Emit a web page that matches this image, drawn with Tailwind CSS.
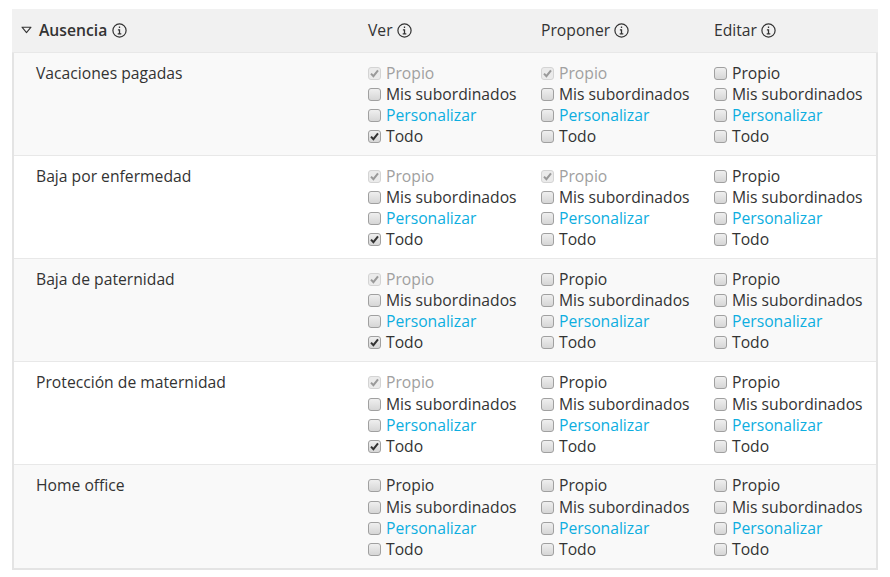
<!DOCTYPE html>
<html lang="es">
<head>
  <meta charset="UTF-8">
  <title>Ausencia</title>
  <script src="https://cdn.jsdelivr.net/npm/@tailwindcss/browser@4"></script>
</head>
<body class="bg-white font-['Open_Sans',sans-serif] text-[15.7px] leading-[21px] text-[#333]">
  <div class="pt-[9px] pl-[12px] w-[878px]">
    <!-- Cabecera -->
    <div class="flex items-center h-[44px] pb-[1px] bg-[#f1f1f1] border-b border-[#e8e8e8]">
      <div class="flex items-center w-[356px] shrink-0 pl-[9px] gap-[7px]">
        <svg width="11" height="8" viewBox="0 0 11 8" fill="none" stroke="#333" stroke-width="1.1"><path d="M1 1.2h9L5.5 6.6z" stroke-linejoin="round"/></svg>
        <span class="font-semibold">Ausencia</span>
        <svg width="15" height="15" viewBox="0 0 15 15" fill="none" stroke="#333" class="-ml-[2px]"><circle cx="7.5" cy="7.5" r="6.6" stroke-width="1.2"/><path d="M7.5 3.5v1.6M5.9 6.8h1.6v4.1M5.7 10.9h3.6" stroke-width="1.3"/></svg>
      </div>
      <div class="flex items-center w-[173px] shrink-0 gap-[4px]">Ver <svg width="15" height="15" viewBox="0 0 15 15" fill="none" stroke="#333"><circle cx="7.5" cy="7.5" r="6.6" stroke-width="1.2"/><path d="M7.5 3.5v1.6M5.9 6.8h1.6v4.1M5.7 10.9h3.6" stroke-width="1.3"/></svg></div>
      <div class="flex items-center w-[173px] shrink-0 gap-[4px]">Proponer <svg width="15" height="15" viewBox="0 0 15 15" fill="none" stroke="#333"><circle cx="7.5" cy="7.5" r="6.6" stroke-width="1.2"/><path d="M7.5 3.5v1.6M5.9 6.8h1.6v4.1M5.7 10.9h3.6" stroke-width="1.3"/></svg></div>
      <div class="flex items-center gap-[4px]">Editar <svg width="15" height="15" viewBox="0 0 15 15" fill="none" stroke="#333"><circle cx="7.5" cy="7.5" r="6.6" stroke-width="1.2"/><path d="M7.5 3.5v1.6M5.9 6.8h1.6v4.1M5.7 10.9h3.6" stroke-width="1.3"/></svg></div>
    </div>
    <!-- Filas -->
    <div id="filas" class="border-x-2 border-b-2 border-[#e4e4e4]"></div>
  </div>

  <script>
    // [nombre, ver propio, proponer propio]
    const filas = [
      ['Vacaciones pagadas', true, true],
      ['Baja por enfermedad', true, true],
      ['Baja de paternidad', true, false],
      ['Protección de maternidad', true, false],
      ['Home office', false, false]
    ];

    const tick = color => `<svg width="9" height="9" viewBox="0 0 9 9" fill="none" stroke="${color}" stroke-width="2"><path d="M1 4.6l2.4 2.6L8 1.4"/></svg>`;

    function check(estado) {
      if (estado === 'bloqueado') {
        return `<span class="flex items-center justify-center w-[13px] h-[13px] shrink-0 rounded-[3px] border border-[#d4d4d4] bg-[#ebebeb]">${tick('#9a9a9a')}</span>`;
      }
      return `<span class="flex items-center justify-center w-[13px] h-[13px] shrink-0 rounded-[3px] border border-[#a0a0a0] bg-gradient-to-b from-[#efefef] to-[#d6d6d6]">${estado ? tick('#333') : ''}</span>`;
    }

    function opcion(texto, estado, clase, fila = '') {
      return `<div class="flex items-center gap-[5px] h-[21px] ${fila}">${check(estado)}<span class="${clase}">${texto}</span></div>`;
    }

    function columna(propio, todo, i) {
      // las dos últimas filas bajan 1px desde la segunda opción
      const salto = i >= 3 ? 'mt-[1px]' : '';
      return `<div class="w-[173px] shrink-0">`
        + opcion('Propio', propio ? 'bloqueado' : false, propio ? 'text-[#a0a0a0]' : '')
        + opcion('Mis subordinados', false, '', salto)
        + opcion('Personalizar', false, 'text-[#0daee0]')
        + opcion('Todo', todo, '')
        + `</div>`;
    }

    document.getElementById('filas').innerHTML = filas.map((f, i) => {
      const fondo = i % 2 === 0 ? 'bg-[#f9f9f9]' : 'bg-white';
      const borde = i < filas.length - 1 ? 'border-b border-[#e8e8e8]' : '';
      return `<div class="flex h-[103px] pt-[10px] ${fondo} ${borde}">
        <div class="w-[354px] shrink-0 pl-[22px]">${f[0]}</div>
        ${columna(f[1], f[1], i)}${columna(f[2], false, i)}${columna(false, false, i)}
      </div>`;
    }).join('');
  </script>
</body>
</html>
